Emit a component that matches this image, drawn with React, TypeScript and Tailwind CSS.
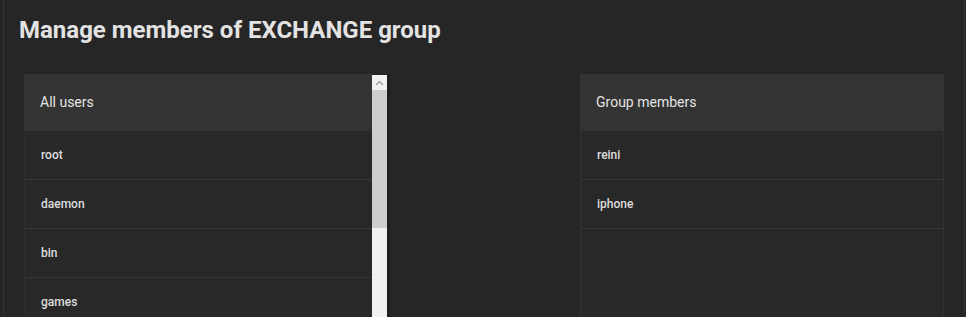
const allUsers = ["root", "daemon", "bin", "games"];
const members = ["reini", "iphone"];

function Row({ name }: { name: string }) {
  return (
    <div className="flex h-[49px] shrink-0 items-center border-b border-[#363636] pl-[16px] text-[12px] font-medium text-[#dedede]">
      {name}
    </div>
  );
}

function PanelHeader({ title }: { title: string }) {
  return (
    <div className="flex h-[57px] shrink-0 items-center bg-[#333333] pl-[16px] text-[14px] text-[#e4e4e4]">
      {title}
    </div>
  );
}

export default function App() {
  return (
    <div
      className="h-[317px] w-full overflow-hidden bg-[#262626]"
      style={{ fontFamily: "Roboto, 'Liberation Sans', sans-serif" }}
    >
      <div className="ml-[3px] mr-[1px] h-full border-x border-[#333333]">
        <h1 className="pl-[15px] pt-[14px] text-[24px] font-bold leading-[32px] text-[#e3e3e3]">
          Manage members of EXCHANGE group
        </h1>
        <div className="mt-[28px] flex items-start pl-[20px]">
          <div className="flex h-[260px] w-[366px] shrink-0">
            <div className="flex w-[348px] flex-col">
              <PanelHeader title="All users" />
              <div className="flex flex-1 flex-col border-l border-[#2e2e2e] bg-[#282828]">
                {allUsers.map((u) => (
                  <Row key={u} name={u} />
                ))}
              </div>
            </div>
            <div className="mt-[1px] flex w-[15px] flex-col bg-[#f1f1f1]">
              <div className="flex h-[15px] items-center justify-center">
                <svg width="9" height="6" viewBox="0 0 9 6">
                  <path d="M1 5 L4.5 1.5 L8 5" fill="none" stroke="#a3a3a3" strokeWidth="1.5" />
                </svg>
              </div>
              <div className="h-[138px] bg-[#cdcdcd]" />
            </div>
            <div className="w-[3px] bg-[#1f1f1f]" />
          </div>
          <div className="ml-[190px] flex h-[260px] w-[364px] shrink-0 flex-col">
            <PanelHeader title="Group members" />
            <div className="flex flex-1 flex-col border-x border-[#333333] bg-[#282828]">
              {members.map((u) => (
                <Row key={u} name={u} />
              ))}
            </div>
          </div>
        </div>
      </div>
    </div>
  );
}
